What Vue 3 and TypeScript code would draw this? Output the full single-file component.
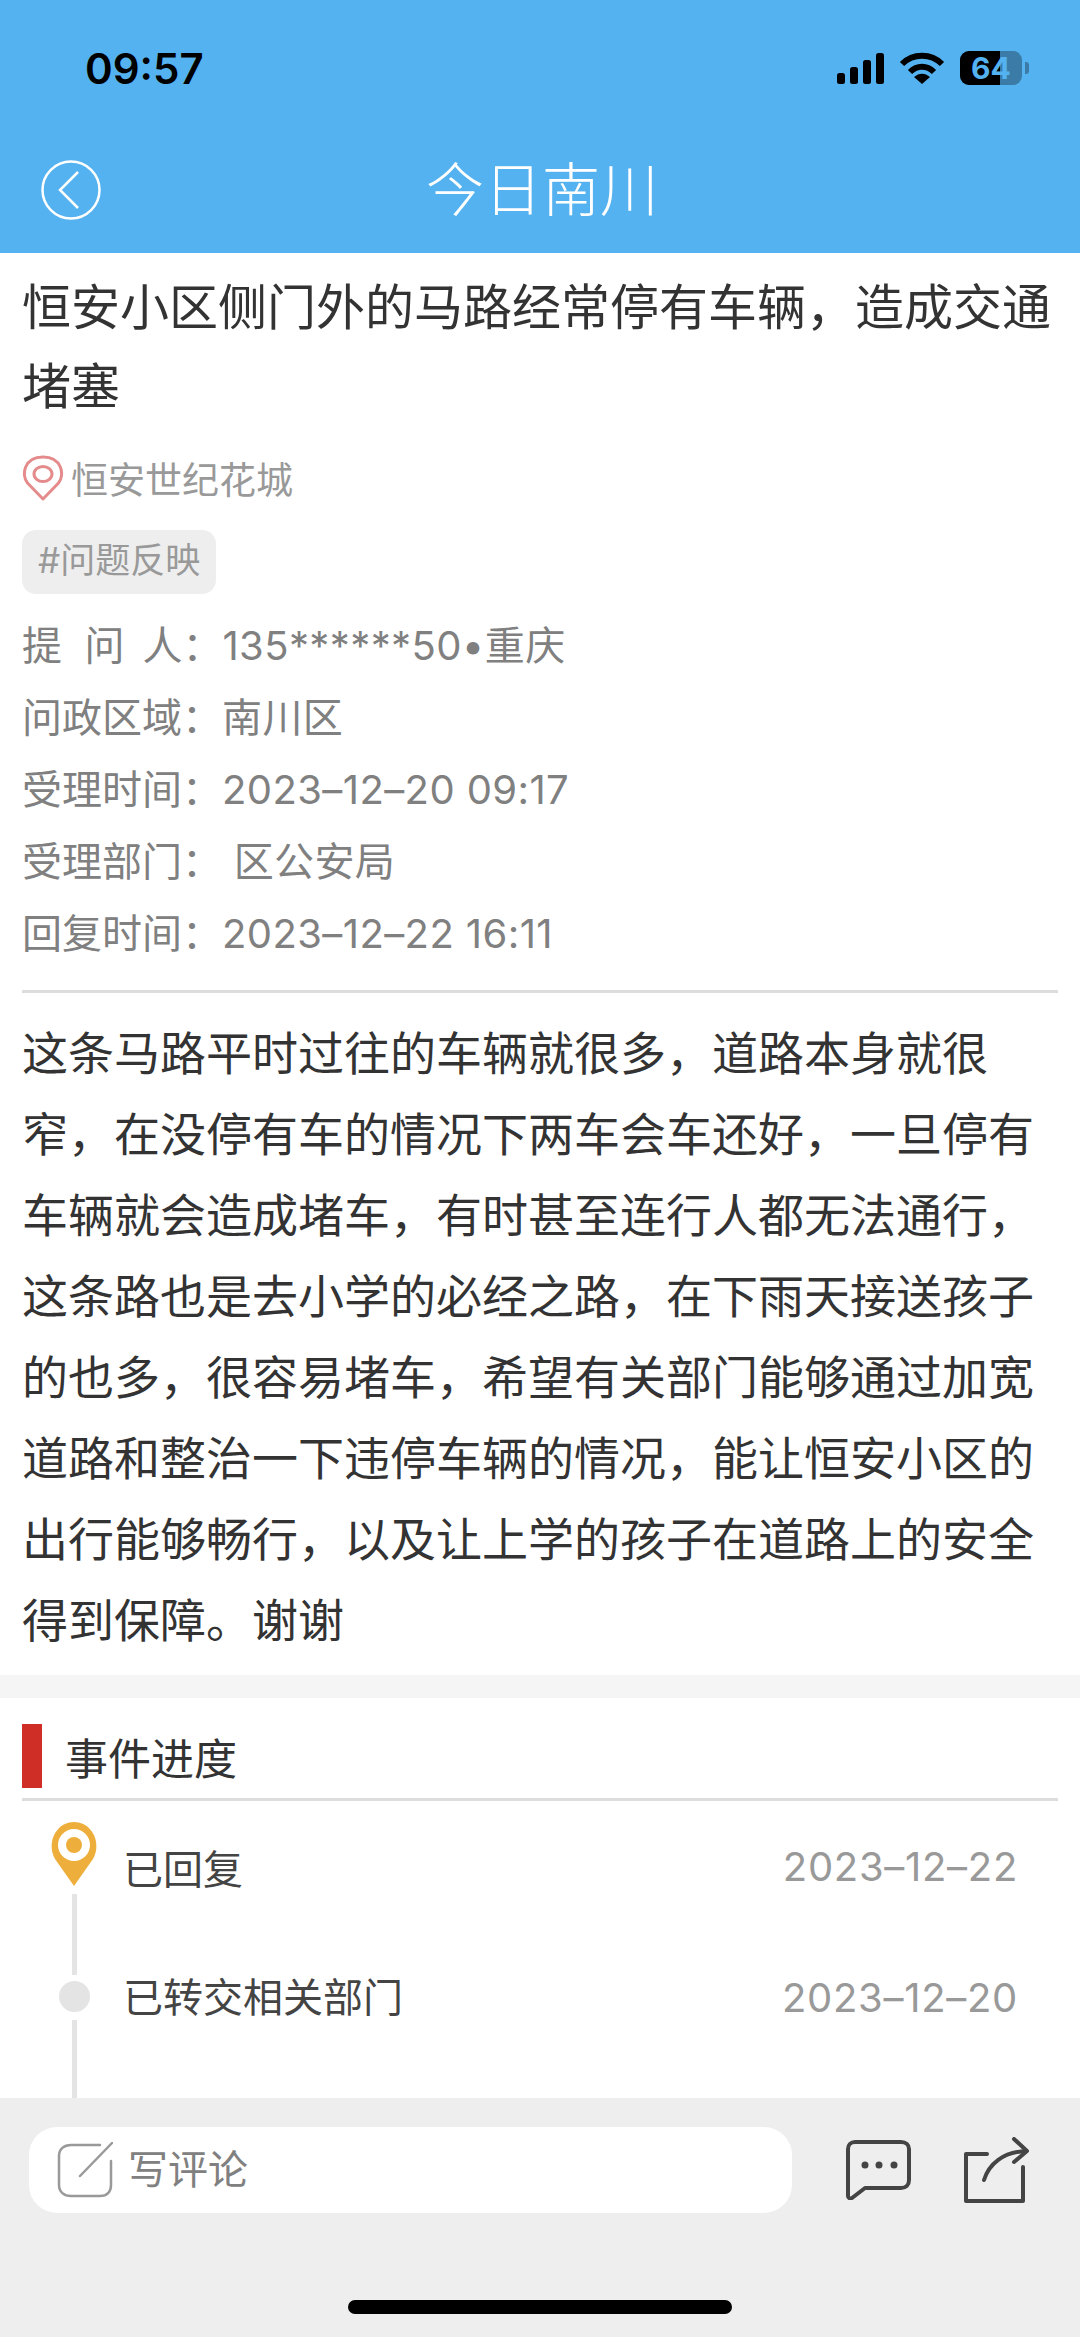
<script setup lang="ts">
interface InfoRow {
  label: string
  value: string
}

const infoRows: InfoRow[] = [
  { label: '提\u00a0\u00a0问\u2006 人：', value: '135******50•重庆' },
  { label: '问政区域：', value: '南川区' },
  { label: '受理时间：', value: '2023–12–20 09:17' },
  { label: '受理部门：', value: '\u00a0区公安局' },
  { label: '回复时间：', value: '2023–12–22 16:11' },
]

const bodyText =
  '这条马路平时过往的车辆就很多，道路本身就很窄，在没停有车的情况下两车会车还好，一旦停有车辆就会造成堵车，有时甚至连行人都无法通行，这条路也是去小学的必经之路，在下雨天接送孩子的也多，很容易堵车，希望有关部门能够通过加宽道路和整治一下违停车辆的情况，能让恒安小区的出行能够畅行，以及让上学的孩子在道路上的安全得到保障。谢谢'
</script>

<template>
  <div class="page">
    <header class="top">
      <div class="status">
        <span class="time">09:57</span>
        <div class="status-icons">
          <svg width="47" height="31" viewBox="0 0 47 31">
            <rect x="0" y="20" width="8" height="11" rx="2.500" />
            <rect x="13" y="14" width="8" height="17" rx="2.500" />
            <rect x="26" y="7" width="8" height="24" rx="2.500" />
            <rect x="39" y="0" width="8" height="31" rx="2.500" />
          </svg>
          <svg width="46" height="34" viewBox="0 0 46 34" fill="none" stroke="#000" stroke-width="6">
            <path d="M3 13C14 2 32 2 43 13" />
            <path d="M11 21C18 14 28 14 35 21" />
            <path d="M23 33L15 26C20 21.500 26 21.500 31 26Z" fill="#000" stroke="none" />
          </svg>
          <div class="battery">
            <div class="battery-fill"></div>
            <span class="battery-num">64</span>
            <div class="battery-tip"></div>
          </div>
        </div>
      </div>
      <div class="nav">
        <svg class="back" width="62" height="62" viewBox="0 0 62 62" fill="none" stroke="#fff">
          <circle cx="31" cy="31" r="28.500" stroke-width="2.500" />
          <path d="M38 13L20 31L38 49" stroke-width="2.500" />
        </svg>
        <span class="nav-title">今日南川</span>
      </div>
    </header>

    <main class="content">
      <section class="article">
        <h1 class="title">恒安小区侧门外的马路经常停有车辆，造成交通堵塞</h1>
        <div class="place">
          <svg width="42" height="46" viewBox="0 0 42 46" fill="none" stroke="#e58b8b" stroke-width="3">
            <path d="M21 44L5.500 28C-1 20 2 2 21 2C40 2 43 20 36.500 28Z" stroke-linejoin="round" />
            <ellipse cx="21" cy="19" rx="9" ry="7.500" />
          </svg>
          <span>恒安世纪花城</span>
        </div>
        <div class="tag">#问题反映</div>
        <div class="info">
          <div v-for="row in infoRows" :key="row.label" class="info-row">
            <span>{{ row.label }}</span><span class="info-value">{{ row.value }}</span>
          </div>
        </div>
        <p class="body-text">{{ bodyText }}</p>
      </section>

      <section class="progress">
        <div class="progress-head">
          <i class="red-mark"></i>
          <span>事件进度</span>
        </div>
        <div class="step step-first">
          <div class="step-axis">
            <svg width="48" height="64" viewBox="0 0 48 64">
              <path d="M24 64L5 37C-4 21 6 0 24 0C42 0 52 21 43 37Z" fill="#eeae3c" />
              <circle cx="24" cy="23" r="16" fill="#fff" />
              <circle cx="24" cy="23" r="8" fill="#eeae3c" />
            </svg>
            <i class="line line-short"></i>
          </div>
          <span class="step-text">已回复</span>
          <span class="step-date">2023–12–22</span>
        </div>
        <div class="step step-second">
          <div class="step-axis">
            <i class="dot"></i>
            <i class="line line-long"></i>
          </div>
          <span class="step-text">已转交相关部门</span>
          <span class="step-date">2023–12–20</span>
        </div>
      </section>
    </main>

    <footer class="bar">
      <div class="bar-row">
        <div class="comment-input">
          <svg width="56" height="56" viewBox="0 0 56 56" fill="none" stroke="#999" stroke-width="2.500" stroke-linecap="round">
            <path d="M43 3H14C7 3 2 7 2 14V43C2 50 7 54 14 54H43C50 54 54 50 54 43V19" />
            <path d="M23 34L55 1" />
          </svg>
          <span class="comment-text">写评论</span>
        </div>
        <svg class="bar-icon" width="66" height="60" viewBox="0 0 66 60" fill="none" stroke="#444" stroke-width="4" stroke-linejoin="round">
          <path d="M9 2H55C60 2 63 5 63 9V40C63 45 60 48 55 48H19L6 58C4 59 2 58 2 56V9C2 5 5 2 9 2Z" />
          <circle cx="19" cy="25" r="3.500" fill="#444" stroke="none" />
          <circle cx="33" cy="25" r="3.500" fill="#444" stroke="none" />
          <circle cx="48" cy="25" r="3.500" fill="#444" stroke="none" />
        </svg>
        <svg class="bar-icon share" width="66" height="66" viewBox="0 0 66 66" fill="none" stroke="#444" stroke-width="4" stroke-linecap="round" stroke-linejoin="round">
          <path d="M24 17H3V64H60V30" />
          <path d="M21 43C26 27 40 15 63 14" />
          <path d="M51 2L64 14L51 25" />
        </svg>
      </div>
      <div class="home-bar"></div>
    </footer>
  </div>
</template>

<style scoped>
.page {
  width: 1080px;
  height: 2337px;
  display: flex;
  flex-direction: column;
  overflow: hidden;
  background: #fff;
  font-family: Inter, "Noto Sans CJK SC", sans-serif;
}

.top {
  height: 253px;
  flex: none;
  background: #54b2f0;
}

.status {
  height: 136px;
  display: flex;
  justify-content: space-between;
  align-items: center;
  padding: 0 58px 0 85px;
}

.time {
  font-size: 42px;
  font-weight: 600;
  color: #000;
}

.status-icons {
  display: flex;
  align-items: center;
  gap: 15px;
}

.battery {
  position: relative;
  width: 62px;
  height: 34px;
  border-radius: 9px;
  background: rgba(0, 0, 0, 0.3);
  color: #54b2f0;
  font-size: 30px;
  font-weight: 700;
  display: flex;
  align-items: center;
  justify-content: center;
}

.battery-fill {
  position: absolute;
  left: 0;
  top: 0;
  bottom: 0;
  width: 40px;
  border-radius: 9px 0 0 9px;
  background: #000;
}

.battery-num {
  position: relative;
}

.battery-tip {
  position: absolute;
  right: -7px;
  top: 11px;
  width: 4px;
  height: 12px;
  border-radius: 0 3px 3px 0;
  background: rgba(0, 0, 0, 0.3);
}

.nav {
  height: 117px;
  position: relative;
  display: flex;
  align-items: flex-start;
  justify-content: center;
  padding: 23px 0 0 4px;
  box-sizing: border-box;
}

.back {
  position: absolute;
  left: 40px;
  top: 23px;
}

.nav-title {
  font-size: 58px;
  line-height: 62px;
  font-weight: 300;
  color: #fff;
}

.content {
  flex: 1;
  min-height: 0;
  overflow: hidden;
  background: #f5f5f5;
}

.article {
  background: #fff;
  padding: 15px 22px 0;
  height: 1422px;
  box-sizing: border-box;
}

.title {
  margin: 0;
  font-size: 49px;
  line-height: 79px;
  font-weight: 400;
  color: #333;
}

.place {
  margin-top: 28px;
  display: flex;
  align-items: center;
  gap: 7px;
  height: 48px;
  font-size: 37px;
  color: #999;
}

.tag {
  margin-top: 28px;
  width: fit-content;
  height: 64px;
  line-height: 61px;
  padding: 0 16px;
  box-sizing: border-box;
  border-radius: 14px;
  background: #eee;
  font-size: 35px;
  color: #999;
}

.info {
  margin-top: 16px;
}

.info-row {
  height: 72px;
  line-height: 72px;
  font-size: 40px;
  color: #808080;
}

.info-value {
  letter-spacing: 0.4px;
}

.body-text {
  margin: 20px 0 0;
  padding-top: 20px;
  border-top: 3px solid #ddd;
  font-size: 46px;
  line-height: 81px;
  color: #333;
}

.progress {
  margin-top: 23px;
  height: 400px;
  background: #fff;
  padding: 0 22px;
  box-sizing: border-box;
}

.progress-head {
  height: 103px;
  display: flex;
  align-items: center;
  gap: 23px;
  border-bottom: 3px solid #ddd;
  box-sizing: border-box;
  padding-top: 15px;
  font-size: 43px;
  color: #333;
}

.red-mark {
  width: 20px;
  height: 64px;
  background: #cf2e26;
}

.step {
  display: flex;
  align-items: flex-start;
  padding-right: 40px;
}

.step-first {
  padding-top: 21px;
  height: 154px;
}

.step-axis {
  width: 80px;
  flex: none;
  display: flex;
  flex-direction: column;
  align-items: center;
  margin-left: 12px;
  margin-right: 9px;
}

.line {
  width: 5px;
  background: #e4e4e4;
}

.line-short {
  margin-top: 8px;
  height: 81px;
}

.line-long {
  margin-top: 8px;
  height: 80px;
}

.dot {
  width: 31px;
  height: 31px;
  border-radius: 50%;
  background: #e4e4e4;
  margin-top: 5px;
}

.step-text {
  flex: 1;
  font-size: 40px;
  line-height: 52px;
  color: #444;
}

.step-first .step-text {
  padding-top: 22px;
}

.step-second .step-text,
.step-second .step-date {
  margin-top: -4px;
}

.step-date {
  font-size: 40px;
  line-height: 52px;
  letter-spacing: 0.7px;
  color: #999;
}

.step-first .step-date {
  padding-top: 19px;
}

.bar {
  height: 239px;
  flex: none;
  background: #eee;
  display: flex;
  flex-direction: column;
  align-items: center;
}

.bar-row {
  width: 100%;
  display: flex;
  align-items: center;
  padding: 29px 0 0 29px;
  box-sizing: border-box;
}

.comment-input {
  width: 763px;
  height: 86px;
  border-radius: 28px;
  background: #fff;
  display: flex;
  align-items: center;
  gap: 15px;
  padding-left: 28px;
  box-sizing: border-box;
  font-size: 40px;
  color: #808080;
}

.comment-text {
  margin-top: -6px;
}

.bar-icon {
  margin-left: 54px;
  flex: none;
}

.share {
  margin-left: 51px;
}

.home-bar {
  margin-top: 87px;
  width: 384px;
  height: 14px;
  border-radius: 7px;
  background: #000;
}
</style>
